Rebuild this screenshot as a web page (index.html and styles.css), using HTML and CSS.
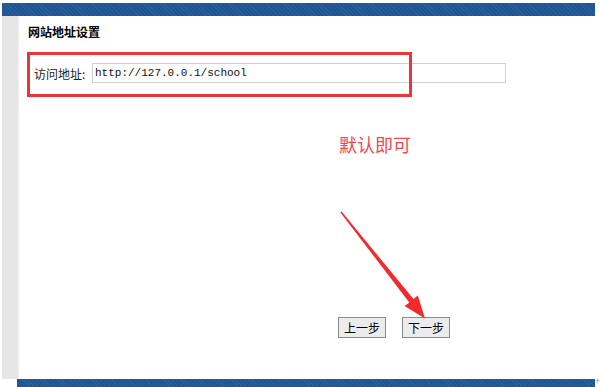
FILE: index.html
```html
<!DOCTYPE html>
<html lang="zh-CN">

<head>
  <meta charset="UTF-8" />
  <meta name="viewport" content="width=device-width, initial-scale=1.0" />
  <title>网站地址设置</title>
  <link rel="stylesheet" href="styles.css">
</head>

<body>
  <div class="topBar"></div>

  <div class="main">
    <div class="side"></div>

    <div class="content">
      <h3 class="title">网站地址设置</h3>

      <!-- address row -->
      <div class="row">
        <label for="siteUrl">访问地址:</label>
        <input type="text" id="siteUrl" value="http://127.0.0.1/school" />
      </div>

      <div class="actions">
        <button type="button" class="btn">上一步</button>
        <button type="button" class="btn">下一步</button>
      </div>
    </div>
  </div>

  <div class="bottomBar"><span class="mark">+</span></div>

  <!-- annotations drawn over the screenshot -->
  <div class="redBox"></div>
  <div class="note">默认即可</div>
  <svg class="arrow" width="600" height="387" viewBox="0 0 600 387">
    <polygon fill="#f22a2e"
      points="340.4,212.4 409.3,302.6 404.6,306 425,318.5 417.8,295.4 413.5,299 341.6,211.6" />
  </svg>
</body>

</html>
```

FILE: styles.css
```css
body {
  margin: 0;
  background-color: #ffffff;
  font-family: "Noto Sans CJK SC", "Noto Sans", sans-serif;
  font-size: 12px;
  color: #000;
  width: 600px;
  height: 387px;
  overflow: hidden;
}

.topBar {
  margin: 3px 5px 0 2px;
  height: 13px;
  background-color: #1e5593;
  background-image: repeating-linear-gradient(45deg, rgba(255, 255, 255, 0.06) 0 1px, transparent 1px 3px);
}

.main {
  display: flex;
  height: 363px;
}

.side {
  width: 16px;
  margin-left: 2px;
  background-color: #e6e6e6;
  border-right: 1px solid #efefef;
}

.content {
  flex: 1;
  padding: 9px 0 0 9px;
}

.title {
  margin: 0;
  font-size: 12px;
  font-weight: bold;
  line-height: 14px;
}

.row {
  display: flex;
  align-items: center;
  margin-top: 24px;
  padding-left: 6px;
}

.row label {
  width: 58px;
  color: #222;
}

.row input {
  width: 408px;
  height: 14px;
  padding: 2px 2px;
  border: 1px solid #cfcfcf;
  font-family: "Liberation Mono", monospace;
  font-size: 11px;
  color: #111;
  outline: none;
}

.actions {
  display: flex;
  gap: 16px;
  margin-top: 234px;
  padding-left: 310px;
}

.btn {
  height: 21px;
  width: 48px;
  padding: 0;
  background-color: #ececec;
  border: 1px solid #8a8a8a;
  font-family: "Noto Sans CJK SC", sans-serif;
  font-size: 12px;
  color: #000;
}

.bottomBar {
  position: relative;
  margin: 0 5px 0 17px;
  height: 8px;
  background-color: #1e5593;
  background-image: repeating-linear-gradient(45deg, rgba(255, 255, 255, 0.06) 0 1px, transparent 1px 3px);
}

.mark {
  position: absolute;
  right: -5px;
  top: -5px;
  font-size: 9px;
  color: #8aa0bb;
}

.redBox {
  position: absolute;
  left: 27px;
  top: 52px;
  width: 379px;
  height: 39px;
  border: 3px solid #e8363b;
}

.note {
  position: absolute;
  left: 339px;
  top: 131px;
  font-size: 18px;
  color: #ee4a4e;
  letter-spacing: 0;
}

.arrow {
  position: absolute;
  left: 0;
  top: 0;
  pointer-events: none;
}
```
